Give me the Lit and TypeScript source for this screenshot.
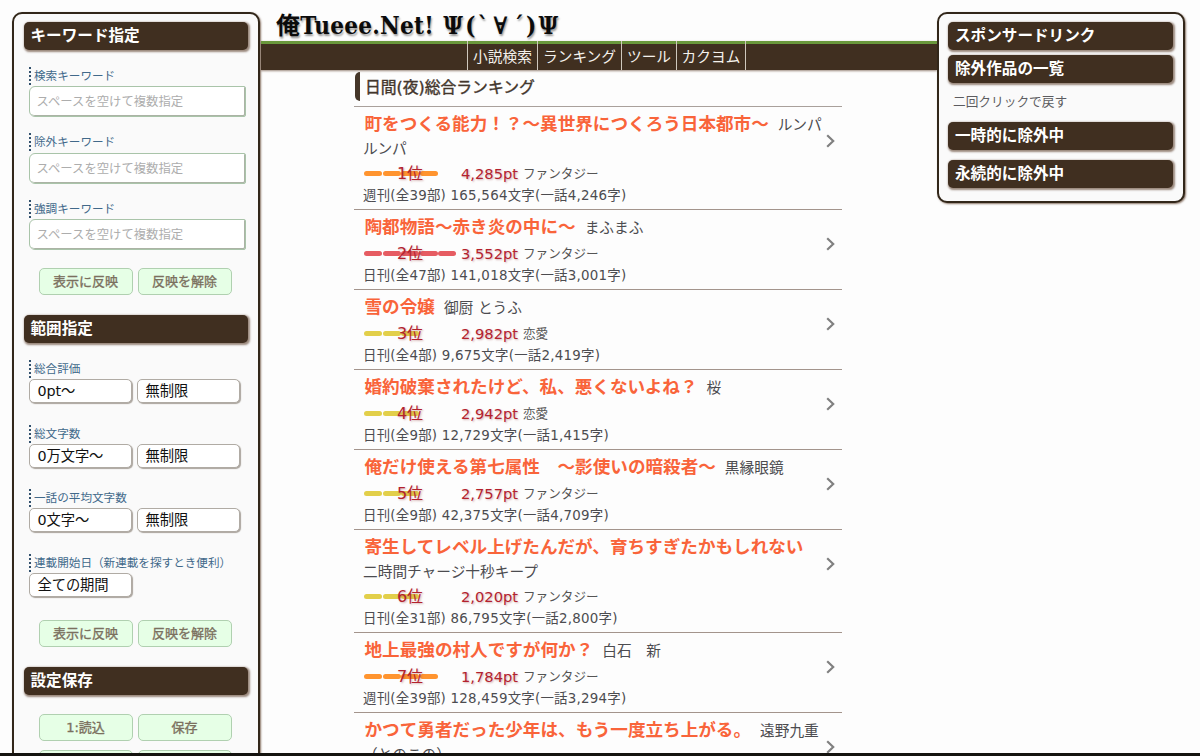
import { LitElement, html, css } from "lit";
import { customElement, property } from "lit/decorators.js";

interface Novel {
  title: string;
  author: string;
  authorRest?: string;
  rank: number;
  points: string;
  genre: string;
  meta: string;
  dashes: number;
  tone: "orange" | "red" | "yellow";
}

const NOVELS: Novel[] = [
  { title: "町をつくる能力！？～異世界につくろう日本都市～", author: "ルンパ", authorRest: "ルンパ", rank: 1, points: "4,285pt", genre: "ファンタジー", meta: "週刊(全39部) 165,564文字(一話4,246字)", dashes: 4, tone: "orange" },
  { title: "陶都物語～赤き炎の中に～", author: "まふまふ", rank: 2, points: "3,552pt", genre: "ファンタジー", meta: "日刊(全47部) 141,018文字(一話3,001字)", dashes: 5, tone: "red" },
  { title: "雪の令嬢", author: "御厨 とうふ", rank: 3, points: "2,982pt", genre: "恋愛", meta: "日刊(全4部) 9,675文字(一話2,419字)", dashes: 3, tone: "yellow" },
  { title: "婚約破棄されたけど、私、悪くないよね？", author: "桜", rank: 4, points: "2,942pt", genre: "恋愛", meta: "日刊(全9部) 12,729文字(一話1,415字)", dashes: 3, tone: "yellow" },
  { title: "俺だけ使える第七属性　～影使いの暗殺者～", author: "黒縁眼鏡", rank: 5, points: "2,757pt", genre: "ファンタジー", meta: "日刊(全9部) 42,375文字(一話4,709字)", dashes: 3, tone: "yellow" },
  { title: "寄生してレベル上げたんだが、育ちすぎたかもしれない", author: "", authorRest: "二時間チャージ十秒キープ", rank: 6, points: "2,020pt", genre: "ファンタジー", meta: "日刊(全31部) 86,795文字(一話2,800字)", dashes: 3, tone: "yellow" },
  { title: "地上最強の村人ですが何か？", author: "白石　新", rank: 7, points: "1,784pt", genre: "ファンタジー", meta: "週刊(全39部) 128,459文字(一話3,294字)", dashes: 4, tone: "orange" },
];

const NEXT_TITLE = "かつて勇者だった少年は、もう一度立ち上がる。";

@customElement("panel-heading")
export class PanelHeading extends LitElement {
  static styles = css`
    :host {
      display: block;
      box-sizing: border-box;
      height: 28px;
      padding-left: 7px;
      border-radius: 5px;
      background: #402f20;
      color: #fff;
      font-size: 15.6px;
      font-weight: 700;
      line-height: 28px;
      white-space: nowrap;
      box-shadow: 1px 1px 2px 0.5px rgba(90, 60, 40, 0.6);
    }
  `;
  render() {
    return html`<slot></slot>`;
  }
}

@customElement("novel-row")
export class NovelRow extends LitElement {
  @property({ attribute: false }) novel!: Novel;
  @property({ type: Boolean }) partial = false;

  static styles = css`
    :host {
      display: flex;
      box-sizing: border-box;
      padding: 6px 0 5px 9px;
      border-bottom: 1px solid #a3948c;
      color: #4c4c50;
      white-space: nowrap;
    }
    .body {
      width: 463px;
      flex: none;
    }
    .line {
      height: 23px;
      line-height: 23px;
      font-size: 14.7px;
    }
    .rest {
      line-height: 25px;
    }
    .title {
      margin-left: 1.5px;
      margin-right: 9px;
      color: #f9643a;
      font-size: 17.6px;
      font-weight: 700;
    }
    .score {
      position: relative;
      display: flex;
      align-items: center;
      height: 29px;
      line-height: 29px;
      color: #b3222e;
      text-shadow: 1px 1px 2px rgba(150, 60, 60, 0.4);
    }
    .dashes {
      position: absolute;
      left: 1px;
      top: 12px;
      display: flex;
      gap: 0.5px;
    }
    .dash {
      width: 18px;
      height: 5px;
      border-radius: 2.5px;
    }
    .orange { background: #ff942f; }
    .red { background: #e65c62; }
    .yellow { background: #e2cf4a; }
    .rank {
      position: relative;
      width: 94px;
      text-align: center;
      font-size: 16px;
    }
    .points {
      margin-left: 4px;
      width: 57px;
      font-size: 14.7px;
    }
    .genre {
      margin-left: 5px;
      color: #555;
      font-size: 12.6px;
      text-shadow: none;
    }
    .meta {
      height: 16px;
      line-height: 16px;
      font-size: 13.4px;
      letter-spacing: 0.25px;
    }
    .arrow {
      display: block;
      flex: none;
      width: 9px;
      height: 14px;
      margin-top: 21px;
    }
  `;

  render() {
    const n = this.novel;
    return html`
      <div class="body">
        <div class="line"><span class="title">${n.title}</span>${n.author}</div>
        ${n.authorRest ? html`<div class="line rest">${n.authorRest}</div>` : ""}
        ${this.partial
          ? ""
          : html`<div class="score">
                <div class="dashes">
                  ${Array.from({ length: n.dashes }, () => html`<div class="dash ${n.tone}"></div>`)}
                </div>
                <span class="rank">${n.rank}位</span>
                <span class="points">${n.points}</span>
                <span class="genre">${n.genre}</span>
              </div>
              <div class="meta">${n.meta}</div>`}
      </div>
      <svg class="arrow" viewBox="0 0 9 14" fill="none" stroke="#808080" stroke-width="2.2">
        <path d="M1.2 1.2 L7.2 7 L1.2 12.8" />
      </svg>
    `;
  }
}

@customElement("app-root")
export class AppRoot extends LitElement {
  static styles = css`
    :host {
      display: flex;
      flex-direction: column;
      width: 1200px;
      height: 756px;
      overflow: hidden;
      background: #fdfdfd;
      font-family: "DejaVu Sans", "Noto Sans CJK JP", sans-serif;
    }
    .page {
      display: grid;
      grid-template-columns: 261px 676px 263px;
      height: 753px;
      overflow: hidden;
    }
    .strip {
      height: 3px;
      background: #14130f;
    }
    .panel {
      box-sizing: border-box;
      width: 248px;
      margin: 12px 0 0 12px;
      padding: 8px 10px 0 9.5px;
      border: 2px solid #32271a;
      border-radius: 10px;
      background: #fafafa;
      box-shadow: 1px 1px 2px rgba(90, 60, 40, 0.7);
    }
    .left {
      height: 800px;
    }
    .right {
      height: 191px;
      margin-left: -0.5px;
    }
    .fields {
      margin-left: 5px;
    }
    .label {
      box-sizing: border-box;
      height: 18px;
      padding-left: 3.5px;
      border-left: 2px dotted #31506c;
      color: #41698a;
      font-size: 11.6px;
      line-height: 18px;
      white-space: nowrap;
    }
    .keywords {
      display: grid;
      row-gap: 16px;
      margin-top: 17px;
    }
    .input {
      box-sizing: border-box;
      width: 217px;
      height: 31px;
      margin-top: 1.4px;
      padding-left: 7px;
      border: 1px solid #a9c4a9;
      border-radius: 6px 2px 2px 6px;
      background: #fff;
      box-shadow: inset -1px -1px 0 #abb3a5;
      color: #adadad;
      font-size: 12.35px;
      line-height: 30px;
      white-space: nowrap;
    }
    .buttons {
      display: grid;
      grid-template-columns: 94px 94px;
      gap: 9px 5px;
      margin-left: 15px;
    }
    .button {
      box-sizing: border-box;
      height: 27px;
      border: 1px solid #b0d0b0;
      border-radius: 5px;
      background: #e6ffe6;
      color: #7b705e;
      font-size: 13px;
      -webkit-text-stroke: 0.35px #7b705e;
      line-height: 25px;
      text-align: center;
      white-space: nowrap;
    }
    .b1 { margin-top: 18px; }
    .b2 { margin-top: 23px; }
    .b3 { margin-top: 19px; }
    .h2 { margin-top: 20px; }
    .ranges {
      display: grid;
      row-gap: 21.5px;
      margin-top: 17px;
    }
    .selects {
      display: flex;
      gap: 5px;
      margin-top: 1px;
    }
    .select {
      box-sizing: border-box;
      width: 103px;
      height: 24px;
      padding-left: 8px;
      border: 1px solid #b0aba4;
      border-radius: 5px;
      background: #fff;
      box-shadow: 1px 1px 1px #aaa49d;
      color: #111;
      font-size: 14.3px;
      line-height: 22px;
      letter-spacing: -0.1px;
      white-space: nowrap;
    }
    .logo {
      height: 41px;
      padding-left: 15px;
      color: #0b0b0b;
      font-family: "DejaVu Serif Condensed", "DejaVu Serif", "Noto Sans CJK JP", serif;
      font-stretch: condensed;
      font-size: 24px;
      font-weight: 700;
      line-height: 51px;
      letter-spacing: 0.25px;
      white-space: nowrap;
      text-shadow: 1px 2px 2px rgba(0, 0, 0, 0.4);
    }
    .face {
      margin-left: 1.5px;
      letter-spacing: 2.2px;
    }
    .wide {
      margin: 0 3.5px 0 3px;
    }
    .nav {
      box-sizing: border-box;
      display: flex;
      height: 29px;
      padding-left: 206px;
      border-top: 3px solid #6a983c;
      background: #402f20;
      box-shadow: 0 1px 2px rgba(90, 60, 40, 0.6);
    }
    .item {
      box-sizing: border-box;
      height: 29px;
      margin-top: -3px;
      padding-top: 3px;
      border-left: 1px solid #cfc8bd;
      color: #f4f1ec;
      font-size: 14.7px;
      line-height: 25px;
      text-align: center;
      white-space: nowrap;
    }
    .w70 { width: 70px; }
    .w84 { width: 84px; }
    .w55 { width: 55px; }
    .last {
      width: 70px;
      border-right: 1px solid #cfc8bd;
    }
    .list {
      width: 488px;
      margin-left: 93px;
    }
    .heading {
      box-sizing: border-box;
      display: flex;
      height: 37px;
      padding: 2px 0 0 1px;
      border-bottom: 1px solid #a9a09b;
      color: #43362c;
      font-size: 15.8px;
      -webkit-text-stroke: 0.4px #43362c;
      line-height: 31px;
    }
    .mark {
      width: 5px;
      height: 29px;
      margin-right: 5px;
      border-radius: 5px 0 0 5px;
      background: #453629;
    }
    .gap5 { margin-top: 5px; }
    .gap10 { margin-top: 10px; }
    .note {
      height: 39px;
      padding-left: 5px;
      color: #5c5c60;
      font-size: 12.7px;
      line-height: 37px;
    }
  `;

  private range(label: string, from: string, to?: string) {
    return html`
      <div>
        <div class="label">${label}</div>
        <div class="selects">
          <div class="select">${from}</div>
          ${to ? html`<div class="select">${to}</div>` : ""}
        </div>
      </div>
    `;
  }

  render() {
    return html`
      <div class="page">
        <aside class="panel left">
          <panel-heading>キーワード指定</panel-heading>
          <div class="fields keywords">
            ${["検索キーワード", "除外キーワード", "強調キーワード"].map(
              (label) => html`<div>
                <div class="label">${label}</div>
                <div class="input">スペースを空けて複数指定</div>
              </div>`
            )}
          </div>
          <div class="buttons b1">
            <div class="button">表示に反映</div>
            <div class="button">反映を解除</div>
          </div>
          <panel-heading class="h2">範囲指定</panel-heading>
          <div class="fields ranges">
            ${this.range("総合評価", "0pt～", "無制限")}
            ${this.range("総文字数", "0万文字～", "無制限")}
            ${this.range("一話の平均文字数", "0文字～", "無制限")}
            ${this.range("連載開始日（新連載を探すとき便利）", "全ての期間")}
          </div>
          <div class="buttons b2">
            <div class="button">表示に反映</div>
            <div class="button">反映を解除</div>
          </div>
          <panel-heading class="h2">設定保存</panel-heading>
          <div class="buttons b3">
            <div class="button">1:読込</div>
            <div class="button">保存</div>
            <div class="button"></div>
            <div class="button"></div>
          </div>
        </aside>
        <main>
          <div class="logo">俺Tueee.Net! <span class="face">Ψ(\`<span class="wide">∀</span>´)Ψ</span></div>
          <nav class="nav">
            <div class="item w70">小説検索</div>
            <div class="item w84">ランキング</div>
            <div class="item w55">ツール</div>
            <div class="item last">カクヨム</div>
          </nav>
          <div class="list">
            <div class="heading"><span class="mark"></span>日間(夜)総合ランキング</div>
            ${NOVELS.map((n) => html`<novel-row .novel=${n}></novel-row>`)}
            <novel-row
              partial
              .novel=${{ ...NOVELS[0], title: NEXT_TITLE, author: "遠野九重", authorRest: "（とのこの）" }}
            ></novel-row>
          </div>
        </main>
        <aside class="panel right">
          <panel-heading>スポンサードリンク</panel-heading>
          <panel-heading class="gap5">除外作品の一覧</panel-heading>
          <div class="note">二回クリックで戻す</div>
          <panel-heading>一時的に除外中</panel-heading>
          <panel-heading class="gap10">永続的に除外中</panel-heading>
        </aside>
      </div>
      <div class="strip"></div>
    `;
  }
}
